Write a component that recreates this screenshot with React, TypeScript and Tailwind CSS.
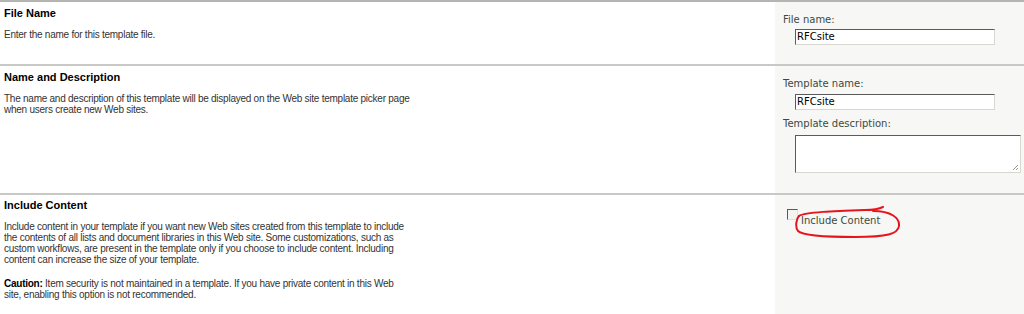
import React from 'react';

const labelFont = { fontFamily: '"DejaVu Sans", Verdana, sans-serif' };

function TextBox({ value }: { value: string }) {
  return (
    <div className="w-[200px] h-[16px] bg-white border border-t-[#5a5a5a] border-l-[#5a5a5a] border-r-[#d8d8d0] border-b-[#d8d8d0] flex items-center pl-[1px] text-[10px] text-black" style={labelFont}>
      {value}
    </div>
  );
}

function Section({
  title,
  children,
  controls,
  height,
}: {
  title: string;
  children: React.ReactNode;
  controls: React.ReactNode;
  height: string;
}) {
  return (
    <div className={`grid grid-cols-[775px_1fr] border-b-2 border-b-[#c8c8c4] ${height}`}>
      <div className="pl-[4px] pt-[5px]">
        <div className="text-[11px] font-bold text-black leading-[13px]">{title}</div>
        <div className="mt-[9px] text-[10px] tracking-[-0.25px] leading-[11px] text-[#333] w-[410px]">{children}</div>
      </div>
      <div className="bg-[#f7f7f5] pl-[8px]">{controls}</div>
    </div>
  );
}

export default function App() {
  return (
    <div
      className="w-[1024px] h-[314px] overflow-hidden bg-white border-t-2 border-t-[#b4b4b0]"
      style={{ fontFamily: '"Liberation Sans", Tahoma, Arial, sans-serif' }}
    >
      <Section
        title="File Name"
        height="h-[64px]"
        controls={
          <div className="pt-[11px] text-[10px] text-[#3d4a3d] leading-[14px]" style={labelFont}>
            <div>File name:</div>
            <div className="pl-[12px] mt-[2px]">
              <TextBox value="RFCsite" />
            </div>
          </div>
        }
      >
        Enter the name for this template file.
      </Section>

      <Section
        title="Name and Description"
        height="h-[129px]"
        controls={
          <div className="pt-[11px] text-[10px] text-[#3d4a3d] leading-[14px]" style={labelFont}>
            <div>Template name:</div>
            <div className="pl-[12px] mt-[3px]">
              <TextBox value="RFCsite" />
            </div>
            <div className="mt-[7px]">Template description:</div>
            <div className="pl-[12px] mt-[4px]">
              <div className="relative w-[226px] h-[38px] bg-white border border-t-[#5a5a5a] border-l-[#5a5a5a] border-r-[#d8d8d0] border-b-[#d8d8d0]">
                <svg className="absolute right-[1px] bottom-[1px]" width="7" height="7" viewBox="0 0 7 7">
                  <path d="M6 1 L1 6 M6 4 L4 6" stroke="#9a9a9a" strokeWidth="1" />
                </svg>
              </div>
            </div>
          </div>
        }
      >
        The name and description of this template will be displayed on the Web site template picker page when users
        create new Web sites.
      </Section>

      <div className="grid grid-cols-[775px_1fr] h-[119px]">
        <div className="pl-[4px] pt-[4px]">
          <div className="text-[11px] font-bold text-black leading-[13px]">Include Content</div>
          <div className="mt-[9px] text-[10px] tracking-[-0.25px] leading-[11px] text-[#333] w-[410px]">
            Include content in your template if you want new Web sites created from this template to include the
            contents of all lists and document libraries in this Web site. Some customizations, such as custom
            workflows, are present in the template only if you choose to include content. Including content can
            increase the size of your template.
          </div>
          <div className="mt-[13px] text-[10px] tracking-[-0.25px] leading-[11px] text-[#333] w-[404px]">
            <span className="font-bold text-black">Caution:</span> Item security is not maintained in a template. If
            you have private content in this Web site, enabling this option is not recommended.
          </div>
        </div>
        <div className="bg-[#f7f7f5] pl-[12px] pt-[14px]">
          <div className="relative flex items-start">
            <div className="w-[11px] h-[11px] border border-t-[#5a5a5a] border-l-[#5a5a5a] border-r-[#e0e0dc] border-b-[#e0e0dc] bg-[#f4f4f0]" />
            <div className="mt-[6px] ml-[3px] text-[10px] text-[#3d4a3d] leading-[12px]" style={labelFont}>
              Include Content
            </div>
            <svg className="absolute left-[8px] top-[-3px]" width="112" height="36" viewBox="0 0 112 36">
              <path
                d="M4 10 C10 6, 40 5, 70 4 C78 4, 84 3, 88 1"
                fill="none"
                stroke="#e8141c"
                strokeWidth="2"
                strokeLinecap="round"
              />
              <path
                d="M78 5 C96 5, 105 12, 104 20 C103 28, 92 31, 60 31 C30 31, 8 30, 3 25 C0 21, 1 13, 4 10"
                fill="none"
                stroke="#e8141c"
                strokeWidth="2"
                strokeLinecap="round"
              />
            </svg>
          </div>
        </div>
      </div>
    </div>
  );
}
